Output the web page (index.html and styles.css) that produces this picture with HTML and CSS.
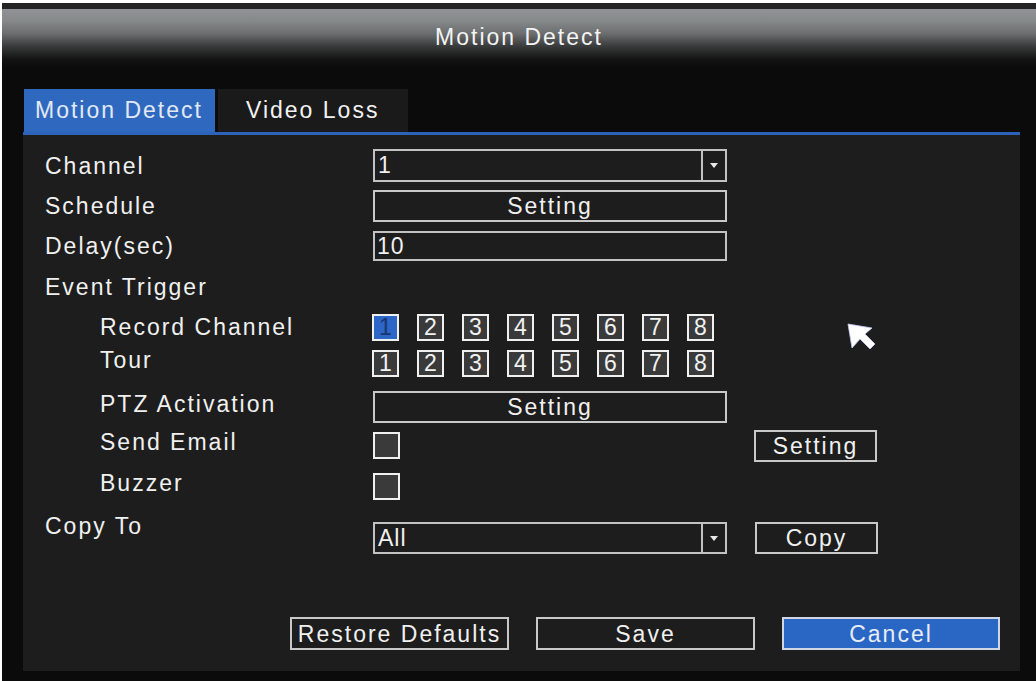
FILE: index.html
```html
<!DOCTYPE html>
<html>
<head>
<meta charset="utf-8">
<link rel="stylesheet" href="styles.css">
</head>
<body>
<div class="screen">
  <div class="topstrip"></div>
  <div class="titlebar">Motion Detect</div>
  <div class="main">
    <div class="tabs">
      <div class="tab active">Motion Detect</div>
      <div class="tab">Video Loss</div>
    </div>
    <div class="panel">
      <div class="row r41">
        <div class="label">Channel</div>
        <div class="select"><span class="val">1</span><span class="arrow"></span></div>
      </div>
      <div class="row r40">
        <div class="label">Schedule</div>
        <div class="btn wide">Setting</div>
      </div>
      <div class="row r40">
        <div class="label">Delay(sec)</div>
        <div class="input">10</div>
      </div>
      <div class="row r41">
        <div class="label">Event Trigger</div>
      </div>
      <div class="row r40">
        <div class="label sub">Record Channel</div>
        <div class="boxes">
          <span class="num on">1</span><span class="num">2</span><span class="num">3</span><span class="num">4</span>
          <span class="num">5</span><span class="num">6</span><span class="num">7</span><span class="num">8</span>
        </div>
      </div>
      <div class="row r33">
        <div class="label sub lift">Tour</div>
        <div class="boxes">
          <span class="num">1</span><span class="num">2</span><span class="num">3</span><span class="num">4</span>
          <span class="num">5</span><span class="num">6</span><span class="num">7</span><span class="num">8</span>
        </div>
      </div>
      <div class="row r44 ptz">
        <div class="label sub lift">PTZ Activation</div>
        <div class="btn wide">Setting</div>
      </div>
      <div class="row r33">
        <div class="label sub lift">Send Email</div>
        <div class="check"></div>
        <div class="btn small email">Setting</div>
      </div>
      <div class="row r49">
        <div class="label sub lift">Buzzer</div>
        <div class="check"></div>
      </div>
      <div class="row copyrow">
        <div class="label">Copy To</div>
        <div class="select drop"><span class="val">All</span><span class="arrow"></span></div>
        <div class="btn small copy">Copy</div>
      </div>
      <div class="footer">
        <div class="btn foot">Restore Defaults</div>
        <div class="btn foot">Save</div>
        <div class="btn foot primary">Cancel</div>
      </div>
      <svg class="cursor" width="32" height="32" viewBox="0 0 32 32">
        <polygon points="2,2 26,6 19,12 29,22 24,27 14,17 6,26" fill="#ffffff" stroke="#c9c9ff" stroke-width="0.8"/>
      </svg>
    </div>
  </div>
</div>
</body>
</html>
```

FILE: styles.css
```css
* { box-sizing: border-box; }
html, body { margin: 0; padding: 0; }
body {
  background: #ffffff;
  font-family: "Liberation Sans", Arial, sans-serif;
  color: #f0f0f0;
  width: 1036px;
  height: 681px;
  overflow: hidden;
}
.screen {
  margin: 3px 0 0 2px;
  width: 1034px;
  height: 678px;
  background: #0b0b0b;
  display: flex;
  flex-direction: column;
}
.topstrip {
  height: 6px;
  background: #242424;
}
.titlebar {
  height: 58px;
  background: linear-gradient(#8f9395 0%, #868a8b 20%, #6c6e6f 42%, #3a3b3c 64%, #141414 86%, #0b0b0b 100%);
  display: flex;
  align-items: center;
  justify-content: center;
  font-size: 23px;
  letter-spacing: 2px;
  color: #f4f4f4;
  padding-bottom: 2px;
}
.main {
  flex: 1;
  display: flex;
  flex-direction: column;
  padding: 22px 16px 10px 21px;
}
.tabs {
  display: flex;
  height: 43px;
}
.tab {
  height: 43px;
  width: 190px;
  margin-left: 3px;
  background: #1a1a1a;
  font-size: 23px;
  letter-spacing: 2px;
  line-height: 43px;
  padding-left: 28px;
  color: #f2f2f2;
}
.tab.active {
  width: 191px;
  margin-left: 1px;
  background: #2f69bf;
  padding-left: 11px;
  color: #e2e9f4;
}
.panel {
  flex: 1;
  position: relative;
  background: #1d1d1d;
  border-top: 3px solid #2d62b9;
  padding: 10px 20px 0 22px;
  display: flex;
  flex-direction: column;
}
.row {
  display: flex;
  align-items: center;
}
.r41 { height: 41px; }
.r40 { height: 40px; }
.r33 { height: 33px; }
.r44 { height: 44px; }
.r49 { height: 49px; }
.ptz { margin-top: 5px; }
.label {
  width: 328px;
  flex: none;
  font-size: 23px;
  letter-spacing: 2px;
  line-height: 24px;
  color: #f0f0f0;
  white-space: nowrap;
}
.label.sub { padding-left: 55px; }
.label.lift { margin-bottom: 7px; }
.select {
  width: 354px;
  height: 33px;
  border: 2px solid #c2c2c2;
  display: flex;
}
.select .val {
  flex: 1;
  font-size: 23px;
  letter-spacing: 1px;
  line-height: 29px;
  padding-left: 3px;
}
.select .arrow {
  width: 24px;
  border-left: 2px solid #c2c2c2;
  display: flex;
  align-items: center;
  justify-content: center;
}
.select .arrow::after {
  content: "";
  border-left: 4px solid transparent;
  border-right: 4px solid transparent;
  border-top: 5px solid #e8e8e8;
}
.input {
  width: 354px;
  height: 30px;
  border: 2px solid #c2c2c2;
  font-size: 23px;
  letter-spacing: 1px;
  line-height: 26px;
  padding-left: 2px;
}
.btn {
  height: 32px;
  border: 2px solid #c8c8c8;
  display: flex;
  align-items: center;
  justify-content: center;
  font-size: 23px;
  letter-spacing: 2px;
  color: #f0f0f0;
  padding-top: 1px;
}
.btn.wide { width: 354px; }
.btn.small { width: 123px; }
.btn.email { margin-left: 354px; }
.boxes {
  display: flex;
  gap: 18px;
  margin-left: -1px;
}
.num {
  width: 27px;
  height: 27px;
  border: 2px solid #f0f0f0;
  background: #3a3a3a;
  font-size: 23px;
  display: flex;
  align-items: center;
  justify-content: center;
  color: #f2f2f2;
  line-height: 1;
}
.num.on {
  background: #2c66c6;
  color: #1a3470;
}
.check {
  width: 27px;
  height: 27px;
  border: 2px solid #f0f0f0;
  background: #3a3a3a;
  flex: none;
}
.copyrow {
  align-items: flex-start;
  margin-top: 3px;
}
.copyrow .drop { margin-top: 8px; height: 32px; }
.copyrow .copy { margin-top: 8px; margin-left: 28px; }
.footer {
  display: flex;
  justify-content: flex-end;
  gap: 27px;
  margin-top: 63px;
}
.btn.foot {
  width: 219px;
  height: 33px;
}
.btn.foot.primary {
  width: 218px;
  background: #2a66c4;
  border-color: #cfd6e4;
  color: #e6edf8;
}
.cursor {
  position: absolute;
  left: 823px;
  top: 187px;
}
```
